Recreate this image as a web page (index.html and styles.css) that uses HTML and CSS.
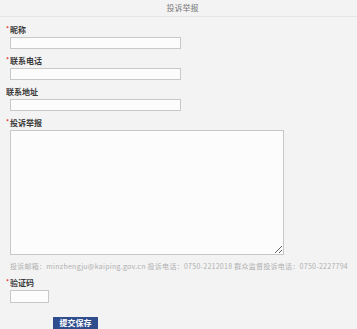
FILE: index.html
```html
<!DOCTYPE html>
<html lang="zh-CN">
<head>
  <meta charset="UTF-8">
  <title>投诉举报</title>
  <link rel="stylesheet" href="styles.css">
</head>
<body>

  <div class="title">投诉举报</div>

  <form class="form">
    <div class="field">
      <label><span class="req">*</span>昵称</label>
      <input type="text" class="text">
    </div>

    <div class="field">
      <label><span class="req">*</span>联系电话</label>
      <input type="text" class="text">
    </div>

    <div class="field">
      <label>联系地址</label>
      <input type="text" class="text">
    </div>

    <div class="field">
      <label><span class="req">*</span>投诉举报</label>
      <textarea class="area"></textarea>
    </div>

    <p class="note">投诉邮箱：minzhengju@kaiping.gov.cn 投诉电话：0750-2212018 群众监督投诉电话：0750-2227794</p>

    <div class="field">
      <label><span class="req">*</span>验证码</label>
      <input type="text" class="code">
    </div>

    <button type="button" class="submit">提交保存</button>
  </form>

</body>
</html>
```

FILE: styles.css
```css
body {
  margin: 0;
  background: #f3f3f3;
  font-family: "Noto Sans CJK SC", "Noto Sans", sans-serif;
  color: #333;
}

.title {
  height: 16px;
  line-height: 16px;
  text-align: center;
  font-size: 8px;
  color: #777;
  padding-left: 8px;
  border-bottom: 1px solid #e6e6e6;
}

.form {
  padding: 7px 0 0 6px;
}

.field {
  margin-bottom: 6px;
}

.field label {
  display: block;
  height: 12px;
  line-height: 12px;
  font-size: 8px;
  font-weight: 600;
  color: #3a3a3a;
  margin-bottom: 1px;
}

.req {
  color: #d33;
  font-size: 6px;
  vertical-align: top;
  line-height: 9px;
  margin-right: 1px;
}

.text, .code, .area {
  display: block;
  box-sizing: border-box;
  margin: 0 0 0 4px;
  padding: 0;
  border: 1px solid #c8c8c8;
  background: #fcfcfc;
}

.text {
  width: 171px;
  height: 12px;
}

.area {
  width: 274px;
  height: 125px;
  resize: vertical;
}

.code {
  width: 39px;
  height: 13px;
}

.note {
  margin: -1px 0 5px 4px;
  height: 12px;
  line-height: 12px;
  font-size: 7px;
  letter-spacing: 0.27px;
  color: #b0b0b0;
  white-space: nowrap;
}

.submit {
  display: block;
  margin: 14px 0 0 47px;
  padding: 0;
  width: 45px;
  height: 12px;
  border: none;
  background: #2f4d8c;
  color: #fff;
  font-family: "Noto Sans CJK SC", sans-serif;
  font-size: 8px;
  font-weight: bold;
  line-height: 12px;
}
```
